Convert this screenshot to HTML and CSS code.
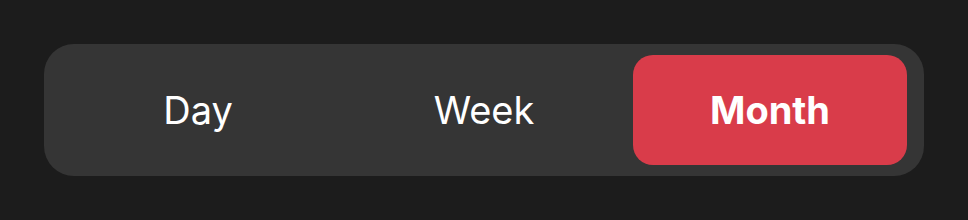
FILE: index.html
```html
<!DOCTYPE html>
<html lang="en">
<head>
    <meta charset="UTF-8">
    <meta name="viewport" content="width=device-width, initial-scale=1.0">
    <title>Range Switch</title>
    <link rel="stylesheet" href="styles.css">
</head>
<body>
    <div class="segmented">
        <button class="segment">Day</button>
        <button class="segment">Week</button>
        <button class="segment active">Month</button>
    </div>
</body>
</html>
```

FILE: styles.css
```css
/* styles.css */
body {
    font-family: Inter, "Noto Sans", sans-serif;
    background-color: #1c1c1c;
    margin: 0;
    padding: 44px;
}

.segmented {
    background-color: #353535;
    border-radius: 30px;
    width: 880px;
    height: 132px;
    box-sizing: border-box;
    padding: 11px 17px;
    display: flex;
    gap: 12px;
}

.segment {
    flex: 1;
    background: none;
    border: none;
    border-radius: 20px;
    color: #ffffff;
    font-family: inherit;
    font-size: 38px;
    font-weight: 400;
    cursor: pointer;
}

.segment.active {
    background-color: #d93c4a;
    font-weight: 700;
}
```
